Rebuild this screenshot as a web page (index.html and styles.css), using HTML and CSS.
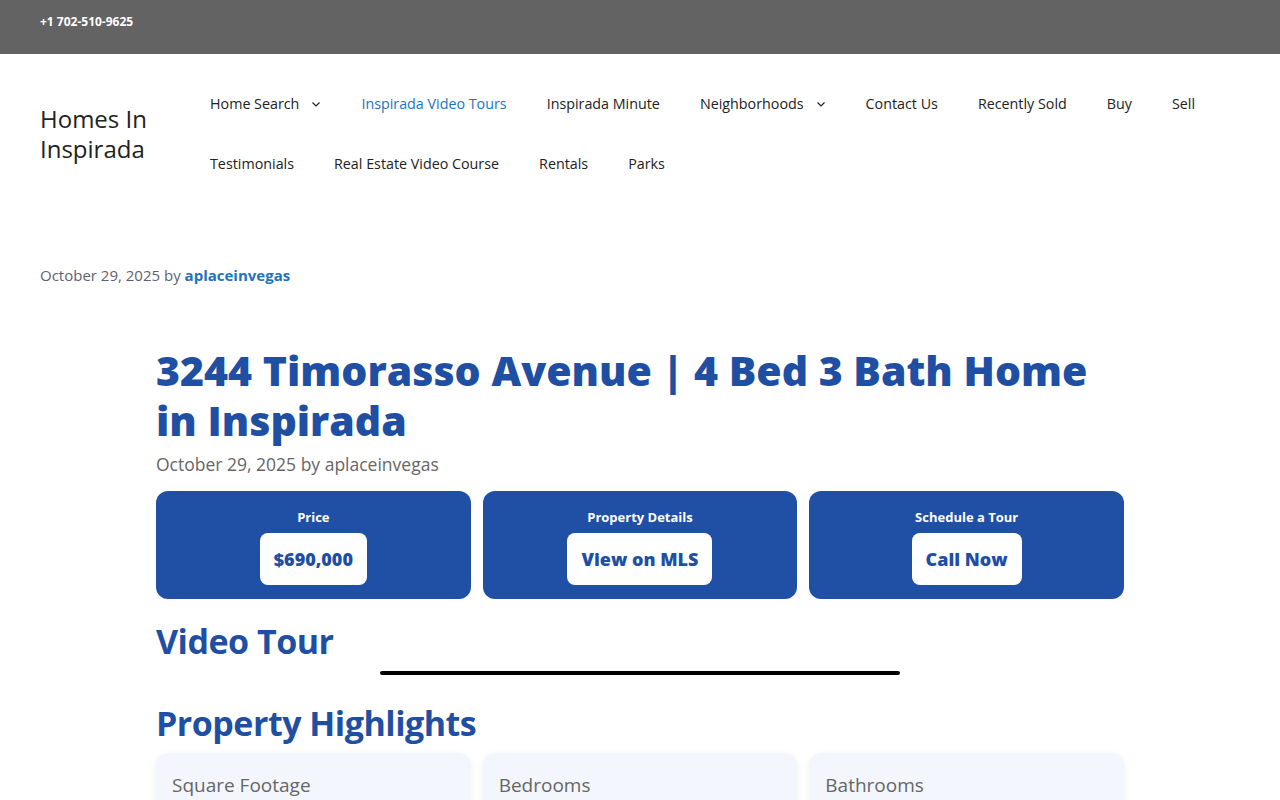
FILE: index.html
```
<!DOCTYPE html>
<html lang="en">
<head>
  <meta charset="UTF-8">
  <meta name="viewport" content="width=device-width, initial-scale=1.0">
  <title>3244 Timorasso Avenue | Homes In Inspirada</title>
  <link rel="stylesheet" href="styles.css">
</head>
<body>

<!-- Top bar with phone number -->
<div class="top-bar">
  <span class="top-phone">+1 702-510-9625</span>
</div>

<header class="site-header">
  <div class="site-title">Homes In<br>Inspirada</div>
  <nav class="main-nav">
    <ul class="menu">
      <li><a href="#">Home Search <span class="caret"><svg width="10" height="10" viewBox="0 0 10 10"><path d="M1.5 3.5 L5 7 L8.5 3.5" fill="none" stroke="#222" stroke-width="1.2"/></svg></span></a></li>
      <li><a href="#" class="current">Inspirada Video Tours</a></li>
      <li><a href="#">Inspirada Minute</a></li>
      <li><a href="#">Neighborhoods <span class="caret"><svg width="10" height="10" viewBox="0 0 10 10"><path d="M1.5 3.5 L5 7 L8.5 3.5" fill="none" stroke="#222" stroke-width="1.2"/></svg></span></a></li>
      <li><a href="#">Contact Us</a></li>
      <li><a href="#">Recently Sold</a></li>
      <li><a href="#">Buy</a></li>
      <li><a href="#">Sell</a></li>
      <li><a href="#">Testimonials</a></li>
      <li><a href="#">Real Estate Video Course</a></li>
      <li><a href="#">Rentals</a></li>
      <li><a href="#">Parks</a></li>
    </ul>
  </nav>
</header>

<div class="entry-meta">
  October 29, 2025 by <a href="#">aplaceinvegas</a>
</div>

<main class="listing">
  <h1 class="listing-title">3244 Timorasso Avenue | 4 Bed 3 Bath Home in Inspirada</h1>
  <p class="listing-meta">October 29, 2025 by aplaceinvegas</p>

  <!-- Quick action cards -->
  <div class="action-grid">
    <div class="action-card">
      <div class="action-label">Price</div>
      <a href="#" class="action-btn">$690,000</a>
    </div>
    <div class="action-card">
      <div class="action-label">Property Details</div>
      <a href="#" class="action-btn">View on MLS</a>
    </div>
    <div class="action-card">
      <div class="action-label">Schedule a Tour</div>
      <a href="tel:7025109625" class="action-btn">Call Now</a>
    </div>
  </div>

  <h2 class="section-title">Video Tour</h2>
  <div class="video-frame"></div>

  <h2 class="section-title">Property Highlights</h2>
  <div class="highlight-grid">
    <div class="highlight-card">Square Footage</div>
    <div class="highlight-card">Bedrooms</div>
    <div class="highlight-card">Bathrooms</div>
  </div>
</main>

</body>
</html>
```

FILE: styles.css
```
* {
  margin: 0;
  padding: 0;
  box-sizing: border-box;
}
body {
  font-family: 'Open Sans', 'Noto Sans', sans-serif;
  background: #ffffff;
  color: #222222;
}
a {
  text-decoration: none;
}
/* Top bar */
.top-bar {
  background-color: #636363;
  height: 54px;
  padding: 9px 40px 0;
}
.top-phone {
  color: #ffffff;
  font-size: 12px;
  font-weight: 700;
}
/* Header */
.site-header {
  display: flex;
  align-items: center;
  padding: 20px 40px;
}
.site-title {
  font-size: 24px;
  font-weight: 500;
  line-height: 30px;
  color: #222222;
  width: 150px;
  flex-shrink: 0;
}
.main-nav {
  flex: 1;
}
.menu {
  list-style: none;
  display: flex;
  flex-wrap: wrap;
}
.menu a {
  display: flex;
  align-items: center;
  padding: 0 20px;
  line-height: 60px;
  font-size: 14.3px;
  color: #222222;
}
.menu a.current {
  color: #1e73be;
}
.caret {
  display: inline-flex;
  margin-left: 12px;
}
/* Post meta */
.entry-meta {
  padding: 46px 40px 0;
  font-size: 15px;
  color: #5d6270;
  line-height: 30px;
}
.entry-meta a {
  color: #1e73be;
  font-weight: 700;
}
/* Listing content */
.listing {
  width: 968px;
  margin: 0 auto;
  padding-top: 55px;
}
.listing-title {
  font-size: 41px;
  font-weight: 800;
  line-height: 50px;
  color: #1f4fa3;
  padding-right: 20px;
}
.listing-meta {
  font-size: 17.5px;
  color: #666666;
  margin-top: 6px;
  line-height: 26px;
}
.action-grid {
  display: grid;
  grid-template-columns: repeat(3, 1fr);
  gap: 12px;
  margin-top: 14px;
}
.action-card {
  background-color: #2050a5;
  border-radius: 12px;
  height: 108px;
  display: flex;
  flex-direction: column;
  align-items: center;
  padding-top: 16px;
}
.action-label {
  color: #ffffff;
  font-size: 13px;
  font-weight: 700;
  line-height: 20px;
}
.action-btn {
  margin-top: 6px;
  background-color: #ffffff;
  color: #1f4fa3;
  font-size: 18px;
  font-weight: 800;
  border-radius: 8px;
  padding: 0 14px;
  line-height: 52px;
}
.section-title {
  font-size: 34px;
  font-weight: 700;
  color: #1f4fa3;
  line-height: 44px;
  letter-spacing: -0.5px;
}
.listing > .section-title:first-of-type {
  margin-top: 20px;
}
.video-frame {
  width: 520px;
  height: 4px;
  background: #000000;
  border-radius: 2px;
  margin: 8px auto 26px;
}
.highlight-grid {
  display: grid;
  grid-template-columns: repeat(3, 1fr);
  gap: 12px;
  margin-top: 8px;
}
.highlight-card {
  background-color: #f3f7fd;
  border-radius: 12px;
  box-shadow: 0 2px 8px rgba(0, 0, 0, 0.06);
  padding: 18px 16px;
  font-size: 19px;
  line-height: 28px;
  color: #666666;
  height: 120px;
}
```
